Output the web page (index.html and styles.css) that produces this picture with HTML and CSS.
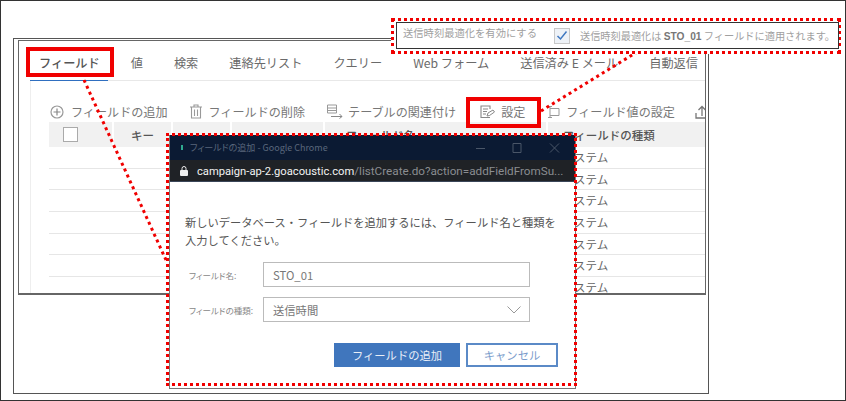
FILE: index.html
```html
<!DOCTYPE html>
<html>

<head>
    <meta charset="utf-8">
    <link rel="stylesheet" href="styles.css">
</head>

<body>
    <div id="canvas">
        <div id="back-frame"></div>

        <div id="app-frame">
            <div class="tabs">
                <span class="tab active">フィールド</span>
                <span class="tab">値</span>
                <span class="tab">検索</span>
                <span class="tab">連絡先リスト</span>
                <span class="tab">クエリー</span>
                <span class="tab">Web フォーム</span>
                <span class="tab">送信済み E メール</span>
                <span class="tab">自動返信</span>
            </div>
            <div class="content">
                <div class="toolbar">
                    <span class="tool add">
                        <svg width="14" height="14" viewBox="0 0 14 14"><circle cx="7" cy="7" r="6" fill="none" stroke="#999" stroke-width="1.2"/><path d="M7 3.5v7M3.5 7h7" stroke="#888" stroke-width="1.2"/></svg>
                        フィールドの追加
                    </span>
                    <span class="tool del">
                        <svg width="14" height="15" viewBox="0 0 14 15"><path d="M1 3h12M5 3V1h4v2M2.500 3v11h9V3M5.500 5.500v6.500M8.500 5.500v6.500" fill="none" stroke="#999" stroke-width="1.1"/></svg>
                        フィールドの削除
                    </span>
                    <span class="tool rel">
                        <svg width="17" height="15" viewBox="0 0 17 15"><path d="M.5 1h9v8h-9zM.5 4h9M.5 6.500h9" fill="none" stroke="#999"/><path d="M4 12.500h11M12.500 10l2.500 2.500-2.500 2" fill="none" stroke="#888"/></svg>
                        テーブルの関連付け
                    </span>
                    <span class="tool setting">
                        <svg width="15" height="14" viewBox="0 0 15 14"><path d="M10 12.500H1V1h9v3M3 4h5M3 6.500h4M3 9h3" fill="none" stroke="#888" stroke-width="1.1"/><path d="M7 11l1-3 5-3 1.500 2-5 3.500z" fill="none" stroke="#888"/></svg>
                        設定
                    </span>
                    <span class="tool value">
                        <svg width="13" height="14" viewBox="0 0 13 14"><path d="M3 3.500h9v7H3M1 1.500h4M1 12.500h4M3 1.500v11" fill="none" stroke="#999"/></svg>
                        フィールド値の設定
                    </span>
                    <span class="tool upload">
                        <svg width="14" height="14" viewBox="0 0 14 14"><path d="M1 8v5h12M7 11V2M3.500 5L7 1.500 10.500 5" fill="none" stroke="#777" stroke-width="1.3"/></svg>
                    </span>
                </div>
                <div class="table">
                    <div class="head">
                        <div class="cell check"><span class="checkbox"></span></div>
                        <div class="cell">キー</div>
                        <div class="cell"></div>
                        <div class="cell"></div>
                        <div class="cell name">フィールド名</div>
                        <div class="cell type">フィールドの種類</div>
                    </div>
                    <div class="row">ステム</div>
                    <div class="row">ステム</div>
                    <div class="row">ステム</div>
                    <div class="row">ステム</div>
                    <div class="row">ステム</div>
                    <div class="row">ステム</div>
                    <div class="row">ステム</div>
                </div>
            </div>
        </div>

        <svg id="leaders" width="846" height="401">
            <path d="M84 80L166 260M541 111L637 52" fill="none" stroke="#f00000" stroke-width="3" stroke-dasharray="3 3.500"/>
        </svg>

        <div id="popup">
            <div class="titlebar">
                <span class="favicon"></span>
                <span class="title">フィールドの追加 - Google Chrome</span>
                <span class="win-controls">
                    <svg width="85" height="12" viewBox="0 0 85 12"><path d="M0 6.500h9M37 1.500h8v9h-8zM74 1.500l9 9M83 1.500l-9 9" fill="none" stroke="#4a5668"/></svg>
                </span>
            </div>
            <div class="urlbar">
                <svg class="lock" width="8" height="10" viewBox="0 0 8 10"><path d="M2 4V2.500a2 2 0 0 1 4 0V4" fill="none" stroke="#eee"/><rect y="4" width="8" height="6" rx="1" fill="#eee"/></svg>
                <span class="url"><b>campaign-ap-2.goacoustic.com</b>/listCreate.do?action=addFieldFromSu...</span>
            </div>
            <div class="popup-body">
                <p class="message">新しいデータベース・フィールドを追加するには、フィールド名と種類を<br>入力してください。</p>
                <div class="field">
                    <label>フィールド名:</label>
                    <div class="input">STO_01</div>
                </div>
                <div class="field">
                    <label>フィールドの種類:</label>
                    <div class="input">送信時間
                        <svg width="14" height="8" viewBox="0 0 14 8"><path d="M.5.500L7 7l6.500-6.500" fill="none" stroke="#999"/></svg>
                    </div>
                </div>
                <div class="buttons">
                    <div class="btn primary">フィールドの追加</div>
                    <div class="btn secondary">キャンセル</div>
                </div>
            </div>
        </div>
        <div id="popup-outline"></div>

        <div id="sto-note">
            <div class="note-box">
                <span class="note-label">送信時刻最適化を有効にする</span>
                <span class="note-check">
                    <svg width="12" height="11" viewBox="0 0 12 11"><path d="M1.500 6l3 3 6-7.500" fill="none" stroke="#3f78c0" stroke-width="1.500"/></svg>
                </span>
                <span class="note-text">送信時刻最適化は <b>STO_01</b> フィールドに適用されます。</span>
            </div>
        </div>

        <div class="red-box tab-mark"></div>
        <div class="red-box setting-mark"></div>
    </div>
</body>

</html>
```

FILE: styles.css
```css
body {
    margin: 0;
    background: #fff;
}

#canvas {
    position: relative;
    box-sizing: border-box;
    width: 846px;
    height: 401px;
    border: 1px solid #333;
    overflow: hidden;
    font-family: "Noto Sans CJK JP", "Open Sans", sans-serif;
    color: #666;
}

#back-frame {
    position: absolute;
    left: 12px;
    top: 37px;
    width: 694px;
    height: 354px;
    border: 1px solid #555;
}

#app-frame {
    position: absolute;
    left: 17px;
    top: 39px;
    box-sizing: border-box;
    width: 688px;
    height: 255px;
    border: 1px solid #666;
    border-bottom-width: 2px;
    overflow: hidden;
    background: #fff;
}

.tabs {
    display: flex;
    gap: 31px;
    height: 40px;
    box-sizing: border-box;
    border-bottom: 1px solid #e8e8e8;
    margin-left: 11px;
    padding: 5px 0 0 9px;
    align-items: center;
    font-size: 12.200px;
    color: #6a6a6a;
    white-space: nowrap;
}

.tab {
    position: relative;
}

.tab.active {
    color: #555;
    font-weight: 500;
}

.tab.active::after {
    position: absolute;
    left: -9px;
    right: -8px;
    bottom: -9px;
    height: 1px;
    background: #2f6fc0;
    content: " ";
}

.content {
    margin-left: 11px;
    border-left: 1px solid #eee;
    padding-left: 18px;
    height: 213px;
}

.toolbar {
    display: flex;
    align-items: center;
    height: 41px;
    font-size: 12.100px;
    color: #777;
    white-space: nowrap;
    padding-top: 20px;
    box-sizing: border-box;
}

.tool {
    display: flex;
    align-items: center;
    gap: 7px;
}

.tool.add { margin-left: 1px; }
.tool.del { margin-left: 21px; gap: 6px; }
.tool.rel { margin-left: 22px; gap: 4px; }
.tool.setting { margin-left: 24px; gap: 6px; }
.tool.value { margin-left: 22px; gap: 6px; }
.tool.upload { margin-left: 20px; }

.head {
    display: grid;
    grid-template-columns: 63px 57px 57px 91px 221px 160px;
    gap: 2px;
    height: 25px;
    font-size: 11.500px;
    color: #555;
    font-weight: 500;
}

.cell {
    display: flex;
    align-items: center;
    justify-content: center;
    background: #f1f1f1;
}

.cell.check {
    justify-content: flex-start;
    padding-left: 14px;
}

.cell.name {
    padding-right: 110px;
    box-sizing: border-box;
}

.cell.type {
    justify-content: flex-start;
    padding-left: 15px;
}

.checkbox {
    width: 13px;
    height: 13px;
    border: 1px solid #aaa;
    background: #fff;
}

.row {
    box-sizing: border-box;
    height: 21.700px;
    border-bottom: 1px solid #e6e6e6;
    padding-left: 525px;
    font-size: 11.500px;
    line-height: 21px;
    color: #666;
}

#leaders {
    position: absolute;
    left: -1px;
    top: -1px;
}

#popup {
    position: absolute;
    left: 168px;
    top: 134px;
    box-sizing: border-box;
    width: 407px;
    height: 254px;
    border-left: 1px solid #777;
    border-right: 1px solid #777;
    border-bottom: 1px solid #777;
    background: #fff;
}

.titlebar {
    display: flex;
    align-items: center;
    height: 25px;
    background: #0b1a33;
    padding-left: 11px;
    font-size: 9px;
    color: #5a677c;
}

.favicon {
    width: 2px;
    height: 5px;
    margin-right: 7px;
    background: #2fa98f;
}

.title {
    font-feature-settings: "palt";
}

.win-controls {
    display: flex;
    margin-left: auto;
    margin-right: 14px;
}

.urlbar {
    display: flex;
    align-items: center;
    gap: 9px;
    height: 22px;
    background: #1f2226;
    padding-left: 10px;
    box-sizing: border-box;
    border-bottom: 1px solid #3a4658;
}

.lock {
    flex: 0 0 auto;
}

.url {
    font-family: Roboto, sans-serif;
    font-size: 11.700px;
    color: #8a8d91;
    white-space: nowrap;
}

.url b {
    font-size: 11.200px;
    font-weight: 400;
    color: #f2f2f2;
}

.popup-body {
    padding: 31px 16px 0 15px;
}

.message {
    margin: 0 0 13px;
    font-size: 11.270px;
    line-height: 18px;
    color: #555;
    white-space: nowrap;
}

.field {
    display: flex;
    align-items: center;
    height: 25px;
    margin-bottom: 10px;
}

.field label {
    width: 78px;
    padding-left: 4px;
    box-sizing: border-box;
    font-size: 8.500px;
    font-feature-settings: "palt";
    color: #888;
    white-space: nowrap;
}

.input {
    display: flex;
    align-items: center;
    justify-content: space-between;
    box-sizing: border-box;
    width: 267px;
    height: 25px;
    padding: 0 8px 0 9px;
    border: 1px solid #bbb;
    font-size: 11.300px;
    color: #777;
}

.buttons {
    display: flex;
    justify-content: flex-end;
    gap: 6px;
    margin: 21px 1px 0 0;
}

.btn {
    display: flex;
    align-items: center;
    justify-content: center;
    box-sizing: border-box;
    height: 24px;
    font-size: 11.300px;
}

.btn.primary {
    width: 126px;
    background: #4076bd;
    color: #e8eef7;
}

.btn.secondary {
    width: 92px;
    border: 2px solid #5b8ac7;
    color: #7a9ccb;
}

#popup-outline {
    position: absolute;
    left: 165px;
    top: 132px;
    box-sizing: border-box;
    width: 411px;
    height: 253px;
    border: 3px dotted #f00000;
}

#sto-note {
    position: absolute;
    left: 390px;
    top: 17px;
    box-sizing: border-box;
    width: 450px;
    height: 36px;
    border: 3px dotted #f00000;
    padding: 1px 0 0 2px;
    background: #fff;
}

.note-box {
    display: flex;
    align-items: center;
    box-sizing: border-box;
    width: 443px;
    height: 27px;
    border: 1px solid #333;
    background: #fff;
    padding-left: 6px;
    white-space: nowrap;
    font-size: 10.300px;
    color: #a0a0a0;
}

.note-label {
    margin-top: -7px;
}

.note-check {
    display: flex;
    align-items: center;
    justify-content: center;
    box-sizing: border-box;
    width: 16px;
    height: 16px;
    margin-left: 17px;
    border: 1px solid #c8c8c8;
    background: #eef2f7;
}

.note-text {
    margin-left: 10px;
    font-size: 10.200px;
    color: #a0a0a0;
}

.note-text b {
    font-family: "Liberation Sans", sans-serif;
    color: #777;
}

.red-box {
    position: absolute;
    box-sizing: border-box;
    border: 4px solid #f00000;
}

.tab-mark {
    left: 25px;
    top: 46px;
    width: 88px;
    height: 30px;
}

.setting-mark {
    left: 465px;
    top: 96px;
    width: 75px;
    height: 31px;
}
```
